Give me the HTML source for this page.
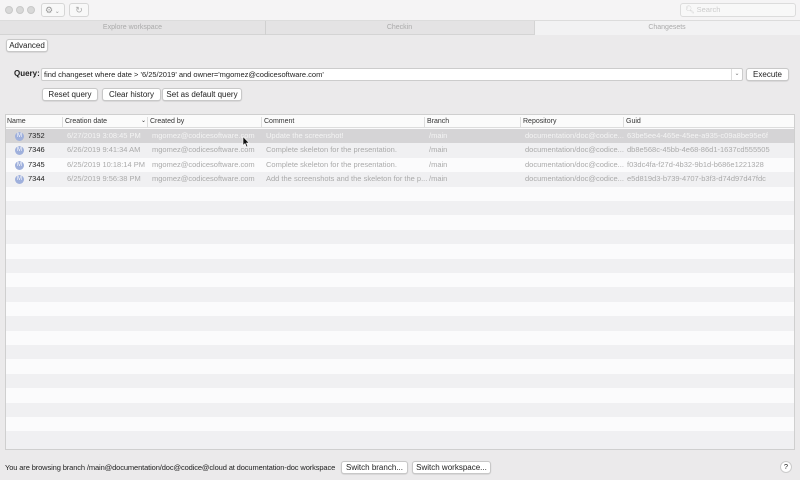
<!DOCTYPE html>
<html><head><style>
*{box-sizing:border-box;margin:0;padding:0}
body{width:800px;height:480px;background:#ebeaeb;font-family:"Liberation Sans",sans-serif;font-size:8px;color:#222;position:relative;overflow:hidden}
.abs{position:absolute}
.btn{position:absolute;background:#fff;border:1px solid #c8c8c8;border-radius:3px;height:13px;font-size:8px;line-height:11px;text-align:center;color:#222;box-shadow:0 0.5px 1px rgba(0,0,0,.15)}
.dot{position:absolute;top:6px;width:8px;height:8px;border-radius:50%;background:#d8d8d8;border:1px solid #c8c8c8}
.row{position:absolute;left:6px;width:788px;height:14.4px;font-size:7.5px;line-height:14.4px;color:#aaa}
.row span{position:absolute;white-space:nowrap}
.hdr span{position:absolute;top:0;line-height:13px;font-size:7px;color:#333}
.sep{position:absolute;top:2px;width:1px;height:10px;background:#ddd}
.m{position:absolute;left:9px;top:3px;width:9px;height:9px;border-radius:50%;background:#9fb0dc;color:#fff;font-size:6px;line-height:9px;text-align:center}
.g{background:#f0f0f2}
</style></head><body>
<div class="abs" style="left:0;top:0;width:800px;height:21px;background:#f5f4f5;border-bottom:1px solid #dcdcdc"></div>
<div class="dot" style="left:5px"></div><div class="dot" style="left:16px"></div><div class="dot" style="left:27px"></div>
<div class="abs" style="left:41px;top:3px;width:24px;height:14px;border:1px solid #d6d6d6;border-radius:3px;background:#f8f8f8;color:#999;font-size:9px;line-height:12px;padding-left:3px">⚙<span style="font-size:6px"> ⌄</span></div>
<div class="abs" style="left:69px;top:3px;width:20px;height:14px;border:1px solid #d6d6d6;border-radius:3px;background:#f8f8f8;color:#aaa;font-size:9px;line-height:12px;text-align:center">↻</div>
<div class="abs" style="left:680px;top:3px;width:116px;height:14px;border:1px solid #dcdcdc;border-radius:3px;background:#f8f8f8;color:#ccc;font-size:7.5px;line-height:12px;padding-left:4px">🔍︎ Search</div>
<div class="abs" style="left:0;top:21px;width:534px;height:14px;background:#e4e3e4;border-bottom:1px solid #d4d4d4"></div>
<div class="abs" style="left:534px;top:21px;width:266px;height:14px;background:#f2f2f3;border-left:1px solid #d4d4d4"></div>
<div class="abs" style="left:265px;top:21px;width:1px;height:14px;background:#d0d0d0"></div>
<div class="abs" style="left:0;top:21px;width:265px;line-height:14px;text-align:center;font-size:7px;color:#aaa">Explore workspace</div>
<div class="abs" style="left:265px;top:21px;width:269px;line-height:14px;text-align:center;font-size:7px;color:#aaa">Checkin</div>
<div class="abs" style="left:534px;top:21px;width:266px;line-height:14px;text-align:center;font-size:7px;color:#aaa">Changesets</div>
<div class="btn" style="left:6px;top:39px;width:42px">Advanced</div>
<div class="abs" style="left:14px;top:69px;font-weight:bold;font-size:8px">Query:</div>
<div class="abs" style="left:41px;top:68px;width:702px;height:13px;background:#fff;border:1px solid #ccc;border-radius:2px;font-size:7.5px;line-height:11px;padding-left:2px">find changeset where date &gt; '6/25/2019' and owner='mgomez@codicesoftware.com'<span style="position:absolute;right:0;top:0;width:11px;height:11px;border-left:1px solid #ddd;text-align:center;color:#777;font-size:6px">⌄</span></div>
<div class="btn" style="left:746px;top:68px;width:43px">Execute</div>
<div class="btn" style="left:42px;top:88px;width:56px">Reset query</div>
<div class="btn" style="left:102px;top:88px;width:59px">Clear history</div>
<div class="btn" style="left:162px;top:88px;width:80px">Set as default query</div>
<div class="abs" style="left:5px;top:114px;width:790px;height:336px;background:#fbfbfc;border:1px solid #cfcfcf"></div>
<div class="row hdr" style="top:115px;height:13px;background:#fbfbfb;border-bottom:1px solid #ddd">
<span style="left:1px">Name</span><span style="left:59px">Creation date</span><span style="left:135px;font-size:6px">⌄</span><span style="left:144px">Created by</span><span style="left:258px">Comment</span><span style="left:421px">Branch</span><span style="left:517px">Repository</span><span style="left:620px">Guid</span>
<div class="sep" style="left:56px"></div><div class="sep" style="left:141px"></div><div class="sep" style="left:255px"></div><div class="sep" style="left:418px"></div><div class="sep" style="left:514px"></div><div class="sep" style="left:617px"></div>
</div>
<div class="row" style="top:129px;background:#d5d4d6;color:#f4f4f4"><div class="m">M</div><span style="left:22px;color:#222">7352</span><span style="left:61px">6/27/2019 3:08:45 PM</span><span style="left:146px">mgomez@codicesoftware.com</span><span style="left:260px">Update the screenshot!</span><span style="left:423px">/main</span><span style="left:519px">documentation/doc@codice...</span><span style="left:621px">63be5ee4-465e-45ee-a935-c09a8be95e6f</span></div>
<div class="row g" style="top:143.4px"><div class="m">M</div><span style="left:22px;color:#222">7346</span><span style="left:61px">6/26/2019 9:41:34 AM</span><span style="left:146px">mgomez@codicesoftware.com</span><span style="left:260px">Complete skeleton for the presentation.</span><span style="left:423px">/main</span><span style="left:519px">documentation/doc@codice...</span><span style="left:621px">db8e568c-45bb-4e68-86d1-1637cd555505</span></div>
<div class="row" style="top:157.8px"><div class="m">M</div><span style="left:22px;color:#222">7345</span><span style="left:61px">6/25/2019 10:18:14 PM</span><span style="left:146px">mgomez@codicesoftware.com</span><span style="left:260px">Complete skeleton for the presentation.</span><span style="left:423px">/main</span><span style="left:519px">documentation/doc@codice...</span><span style="left:621px">f03dc4fa-f27d-4b32-9b1d-b686e1221328</span></div>
<div class="row g" style="top:172.2px"><div class="m">M</div><span style="left:22px;color:#222">7344</span><span style="left:61px">6/25/2019 9:56:38 PM</span><span style="left:146px">mgomez@codicesoftware.com</span><span style="left:260px">Add the screenshots and the skeleton for the p...</span><span style="left:423px">/main</span><span style="left:519px">documentation/doc@codice...</span><span style="left:621px">e5d819d3-b739-4707-b3f3-d74d97d47fdc</span></div>
<div class="row g" style="top:201px"></div>
<div class="row g" style="top:229.8px"></div>
<div class="row g" style="top:258.6px"></div>
<div class="row g" style="top:287.4px"></div>
<div class="row g" style="top:316.2px"></div>
<div class="row g" style="top:345px"></div>
<div class="row g" style="top:373.8px"></div>
<div class="row g" style="top:402.6px"></div>
<div class="row g" style="top:431.4px;height:17.6px"></div>
<svg class="abs" style="left:242px;top:136px" width="8" height="12" viewBox="0 0 8 12"><path d="M1 0.5 L1 9.5 L3 7.5 L4.5 11 L5.8 10.4 L4.4 7 L7.2 7 Z" fill="#111" stroke="#fff" stroke-width="0.6"/></svg>
<div class="abs" style="left:5px;top:463px;line-height:9px;font-size:7.5px;letter-spacing:-0.12px;color:#222;white-space:nowrap">You are browsing branch /main@documentation/doc@codice@cloud at documentation-doc workspace</div>
<div class="btn" style="left:341px;top:461px;width:67px">Switch branch...</div>
<div class="btn" style="left:412px;top:461px;width:79px">Switch workspace...</div>
<div class="abs" style="left:780px;top:461px;width:12px;height:12px;border:1px solid #ccc;border-radius:50%;background:#fff;font-size:7.5px;line-height:10px;text-align:center">?</div>
</body></html>
